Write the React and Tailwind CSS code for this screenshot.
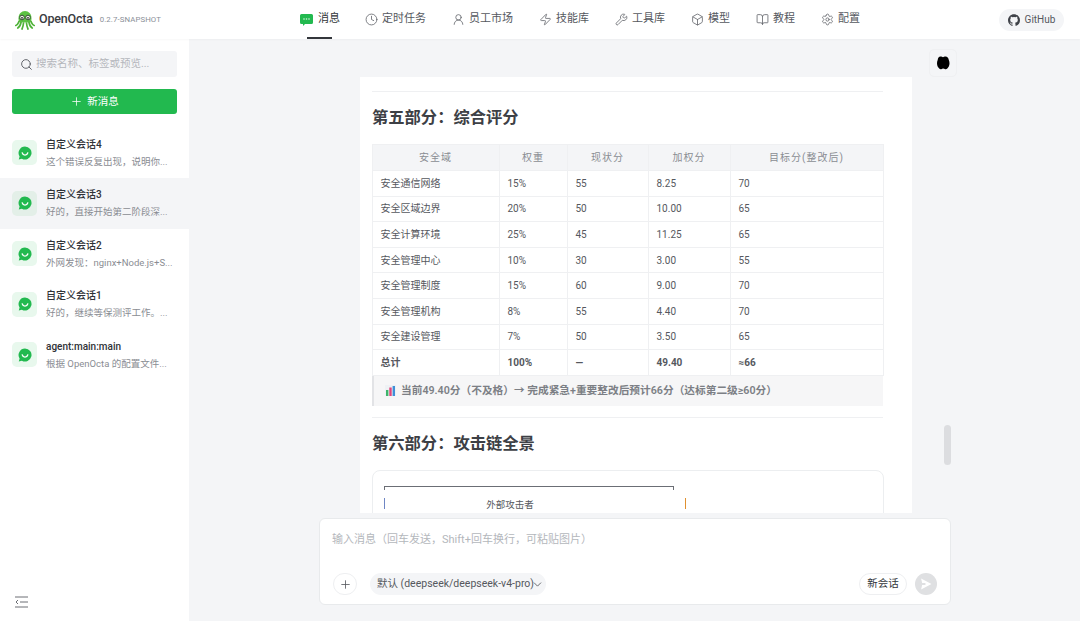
import { Clock, UserRound, Zap, Wrench, Box, BookOpen, Settings, Search, Plus, ChevronDown } from "lucide-react";

const font = "font-['Roboto','Noto_Sans_CJK_SC',sans-serif]";

const Logo = () => (
  <svg width="20" height="20" viewBox="0 0 20 20">
    <path d="M3.500 8.500C3.500 3.800 6.400 1 10 1s6.500 2.800 6.500 7.500c0 2-.6 3.200-1.500 4l-10 0c-.9-.8-1.500-2-1.500-4z" fill="#5cc243" />
    <path d="M4 11.500C3 13.500 2.500 15 .8 15.500M6 12.500C5.500 15 4.500 17 2.800 18M8.500 13c-.2 2.500-.5 4-1.500 6M11.500 13c.2 2.500.5 4 1.500 6M14 12.500c.5 2.500 1.500 4.500 3.200 5.500M16 11.500c1 2 1.500 3.500 3.200 4" stroke="#4fb238" strokeWidth="1.700" fill="none" strokeLinecap="round" />
    <circle cx="7" cy="7.500" r="2.300" fill="#eef7ea" stroke="#2b3a2b" strokeWidth=".9" />
    <circle cx="13" cy="7.500" r="2.300" fill="#eef7ea" stroke="#2b3a2b" strokeWidth=".9" />
    <circle cx="7" cy="7.800" r=".9" fill="#222" />
    <circle cx="13" cy="7.800" r=".9" fill="#222" />
  </svg>
);

const MsgIcon = () => (
  <svg width="13" height="12" viewBox="0 0 13 12">
    <path d="M1.500 0h10A1.500 1.500 0 0 1 13 1.500v7A1.500 1.500 0 0 1 11.500 10H5L3 12v-2H1.500A1.500 1.500 0 0 1 0 8.500v-7A1.500 1.500 0 0 1 1.500 0z" fill="#22b94f" />
    <circle cx="4" cy="5" r=".8" fill="#d6f5df" />
    <circle cx="6.500" cy="5" r=".8" fill="#d6f5df" />
    <circle cx="9" cy="5" r=".8" fill="#d6f5df" />
  </svg>
);

const GithubIcon = () => (
  <svg width="12" height="12" viewBox="0 0 24 24" fill="#3f4248">
    <path d="M12 .5C5.400.5 0 5.900 0 12.500c0 5.300 3.400 9.800 8.200 11.400.6.100.8-.3.800-.6v-2.200c-3.300.7-4-1.600-4-1.600-.5-1.400-1.300-1.800-1.300-1.800-1.100-.7.100-.7.100-.7 1.200.1 1.800 1.200 1.800 1.200 1.100 1.800 2.800 1.300 3.500 1 .1-.8.400-1.300.8-1.600-2.700-.3-5.500-1.300-5.500-5.900 0-1.300.5-2.400 1.200-3.200-.1-.3-.5-1.500.1-3.200 0 0 1-.3 3.300 1.200a11.500 11.500 0 0 1 6 0c2.300-1.500 3.300-1.200 3.300-1.200.7 1.700.2 2.900.1 3.200.8.800 1.200 1.900 1.200 3.200 0 4.600-2.800 5.600-5.500 5.900.4.400.8 1.100.8 2.200v3.300c0 .3.200.7.800.6A12 12 0 0 0 24 12.500C24 5.900 18.600.5 12 .5z" />
  </svg>
);

const ChatIcon = () => (
  <svg width="14" height="14" viewBox="0 0 14 14">
    <path d="M7 .5a6.500 6.500 0 1 1-3.100 12.200L.8 13.500l.8-3A6.500 6.500 0 0 1 7 .5z" fill="#22b94f" />
    <path d="M4.200 6.800c.5 1.700 1.500 2.400 2.800 2.400s2.300-.7 2.800-2.400" stroke="#fff" strokeWidth="1.300" fill="none" strokeLinecap="round" />
  </svg>
);

const BrainBlob = () => (
  <svg width="14" height="14" viewBox="0 0 14 14" fill="#000">
    <path d="M4.500.5c1 0 2 .3 2.500.8.500-.5 1.500-.8 2.500-.8 1.800 0 3 1.500 3.300 3.500.4.800.7 2 .7 3.200 0 2.300-.8 4-2 5-.8.900-2.500 1.500-3.300.6L7 12.400l-.7.400c-.8.900-2.500.3-3.300-.6-1.200-1-2-2.700-2-5 0-1.200.3-2.400.7-3.200C2 2 2.700.5 4.500.5z" />
  </svg>
);

const ChartIcon = () => (
  <svg width="11" height="11" viewBox="0 0 11 11" className="shrink-0">
    <rect width="11" height="11" fill="#eef1f4" />
    <rect x="1" y="5" width="2.400" height="6" fill="#3fb56b" />
    <rect x="4.300" y="2.500" width="2.400" height="8.500" fill="#e0457b" />
    <rect x="7.600" y="1" width="2.400" height="10" fill="#3f8fd8" />
  </svg>
);

const navItems = [
  { label: "定时任务", Icon: Clock },
  { label: "员工市场", Icon: UserRound },
  { label: "技能库", Icon: Zap },
  { label: "工具库", Icon: Wrench },
  { label: "模型", Icon: Box },
  { label: "教程", Icon: BookOpen },
  { label: "配置", Icon: Settings },
];

const sessions = [
  { title: "自定义会话4", sub: "这个错误反复出现，说明你..." },
  { title: "自定义会话3", sub: "好的，直接开始第二阶段深...", active: true },
  { title: "自定义会话2", sub: "外网发现：nginx+Node.js+S..." },
  { title: "自定义会话1", sub: "好的，继续等保测评工作。..." },
  { title: "agent:main:main", sub: "根据 OpenOcta 的配置文件..." },
];

const rows = [
  ["安全通信网络", "15%", "55", "8.25", "70"],
  ["安全区域边界", "20%", "50", "10.00", "65"],
  ["安全计算环境", "25%", "45", "11.25", "65"],
  ["安全管理中心", "10%", "30", "3.00", "55"],
  ["安全管理制度", "15%", "60", "9.00", "70"],
  ["安全管理机构", "8%", "55", "4.40", "70"],
  ["安全建设管理", "7%", "50", "3.50", "65"],
];

const Header = () => (
  <header className="h-[39px] shrink-0 bg-white flex items-center relative shadow-[0_1px_2px_rgba(0,0,0,0.03)]">
    <div className="w-[300px] shrink-0 flex items-center pl-[15px]">
      <Logo />
      <span className="ml-[4px] text-[12.500px] font-medium text-[#3a3c41] tracking-[-0.2px]">OpenOcta</span>
      <span className="ml-[7px] text-[7.800px] text-[#8a8f98] tracking-[0.1px]">0.2.7-SNAPSHOT</span>
    </div>
    <nav className="flex items-center h-full">
      <div className="relative h-full flex items-center gap-[5px] pr-[13px] text-[11px] text-[#33363b]">
        <MsgIcon />
        <span>消息</span>
        <div className="absolute bottom-0 left-[7px] w-[25px] h-[2px] bg-[#33363b]" />
      </div>
      {navItems.map(({ label, Icon }) => (
        <div key={label} className="flex items-center gap-[4px] pl-[12px] pr-[14px] text-[11px] text-[#55585e]">
          <Icon size={13} strokeWidth={1.5} className="text-[#62656b] -mt-[1px]" />
          <span>{label}</span>
        </div>
      ))}
    </nav>
    <div className="ml-auto mr-[16px] h-[22px] w-[65px] rounded-full bg-[#f4f5f7] flex items-center justify-center gap-[5px] text-[10px] text-[#55585e]">
      <GithubIcon />
      <span>GitHub</span>
    </div>
  </header>
);

const Sidebar = () => (
  <aside className="w-[189px] shrink-0 bg-white flex flex-col px-0 pt-[12px]">
    <div className="mx-[12px] h-[26px] rounded-[3px] bg-[#f4f5f7] flex items-center pl-[8px] gap-[3px] text-[10.500px] text-[#b4b7bc]">
      <Search size={13} strokeWidth={1.8} className="text-[#5f6268]" />
      <span>搜索名称、标签或预览...</span>
    </div>
    <div className="mx-[12px] mt-[12px] h-[25px] rounded-[3px] bg-[#22b94f] flex items-center justify-center gap-[4px] text-[10.500px] text-white">
      <Plus size={13} strokeWidth={1.4} />
      <span className="pt-px">新消息</span>
    </div>
    <div className="mt-[13.500px] flex flex-col">
      {sessions.map((s) => (
        <div key={s.title} className={`h-[50.500px] pl-[12px] flex items-center gap-[9px] ${s.active ? "bg-[#f4f5f7]" : ""}`}>
          <div className={`w-[25px] h-[25px] rounded-[5px] flex items-center justify-center ${s.active ? "bg-[#e3efe8]" : "bg-[#e8f8ed]"}`}>
            <ChatIcon />
          </div>
          <div className="flex flex-col gap-[3px] pt-[1px]">
            <div className="text-[10px] leading-[14px] font-medium text-[#2f3237]">{s.title}</div>
            <div className="text-[9.500px] leading-[14px] text-[#8a8d93] whitespace-nowrap">{s.sub}</div>
          </div>
        </div>
      ))}
    </div>
    <div className="mt-auto pl-[15px] pb-[13px] text-[#6c6f75]">
      <svg width="13" height="12" viewBox="0 0 13 12" fill="none" stroke="currentColor" strokeWidth="1">
        <path d="M0 1h13M5 6h8M0 11h13M3 4L1 6l2 2" />
      </svg>
    </div>
  </aside>
);

const Report = () => (
  <div className="w-[552px] h-[436px] mt-[38px] ml-[171px] bg-white pl-[12px] pr-[29px] overflow-hidden shrink-0">
    <div className="mt-[14px] border-t border-[#eff0f2]" />
    <h2 className="mt-[14px] text-[16.300px] leading-[24px] font-bold text-[#3d4045]">第五部分：综合评分</h2>
    <table className="mt-[14px] -ml-[0.500px] w-[511px] table-fixed border-collapse text-[10px] text-[#55585e]">
      <colgroup>
        <col className="w-[127px]" />
        <col className="w-[68px]" />
        <col className="w-[81px]" />
        <col className="w-[82px]" />
        <col className="w-[153px]" />
      </colgroup>
      <thead>
        <tr className="h-[26px] bg-[#f4f5f7] text-[#8a8d93]">
          {["安全域", "权重", "现状分", "加权分", "目标分(整改后)"].map((h) => (
            <th key={h} className="border border-[#eff0f2] font-normal tracking-[1px] text-center">{h}</th>
          ))}
        </tr>
      </thead>
      <tbody>
        {rows.map((r) => (
          <tr key={r[0]} className="h-[25.600px]">
            {r.map((c, i) => (
              <td key={i} className="border border-[#eff0f2] pl-[8px]">{c}</td>
            ))}
          </tr>
        ))}
        <tr className="h-[25.600px] font-bold">
          {["总计", "100%", "—", "49.40", "≈66"].map((c) => (
            <td key={c} className="border border-[#eff0f2] pl-[8px]">{c}</td>
          ))}
        </tr>
      </tbody>
    </table>
    <div className="h-[30px] w-[511px] bg-[#f6f6f7] border-l-[2px] border-[#e2e3e6] pl-[11px] flex items-center gap-[5px] text-[10.700px] font-semibold text-[#7c7f85] whitespace-nowrap">
      <ChartIcon />
      <span>当前49.40分（不及格）→ 完成紧急+重要整改后预计66分（达标第二级≥60分）</span>
    </div>
    <div className="mt-[11px] border-t border-[#eff0f2]" />
    <h2 className="mt-[14px] text-[16.300px] leading-[24px] font-bold text-[#3d4045]">第六部分：攻击链全景</h2>
    <div className="mt-[14px] w-[512px] h-[80px] rounded-t-[8px] border border-[#eceef0] pt-[15px] pl-[11px]">
      <div className="w-[290px] h-[4px] border-t border-x border-[#6b6e75]" />
      <div className="flex w-[302px] h-[12px] mt-[8px] justify-between">
        <div className="w-px h-[11px] bg-[#6f86c4]" />
        <div className="w-px h-[11px] bg-[#e0902f]" />
      </div>
      <div className="w-[252px] -mt-[12px] text-center text-[9.500px] leading-[14px] text-[#55585e]">外部攻击者</div>
    </div>
  </div>
);

const Composer = () => (
  <div className="mt-[5px] ml-[130px] w-[632px] h-[87px] shrink-0 rounded-[6px] bg-white border border-[#e8eaec] flex flex-col px-[13px] pt-[13px] pb-[9px]">
    <div className="-ml-[1px] text-[11px] leading-[15px] text-[#b4b7bc]">输入消息（回车发送，Shift+回车换行，可粘贴图片）</div>
    <div className="mt-auto flex items-center">
      <div className="w-[24px] h-[22px] rounded-full border border-[#eeeff1] flex items-center justify-center text-[#55585e]">
        <Plus size={13} strokeWidth={1.5} />
      </div>
      <div className="ml-[13px] h-[22px] w-[176px] rounded-full bg-[#f4f5f7] flex items-center pl-[7px] text-[10.500px] text-[#55585e] whitespace-nowrap">
        <span>默认 (deepseek/deepseek-v4-pro)</span>
        <ChevronDown size={13} strokeWidth={1.6} className="shrink-0 -ml-[3px]" />
      </div>
      <div className="ml-auto h-[22px] w-[48px] rounded-full border border-[#eeeff1] flex items-center justify-center text-[10.500px] text-[#33363b]">新会话</div>
      <div className="ml-[8px] w-[22px] h-[22px] rounded-full bg-[#dfe0e2] flex items-center justify-center">
        <svg width="12" height="12" viewBox="0 0 11 11"><path d="M1 .5l9.500 5-9.500 5 1-4h3v-2H2z" fill="#fff" /></svg>
      </div>
    </div>
  </div>
);

const App = () => (
  <div className={`w-[1080px] h-[621px] flex flex-col overflow-hidden bg-[#f4f5f7] ${font}`}>
    <Header />
    <div className="flex flex-1 min-h-0">
      <Sidebar />
      <main className="relative flex-1 flex flex-col">
        <Report />
        <Composer />
        <div className="absolute left-[740px] top-[10px] w-[28px] h-[28px] rounded-[5px] border border-[#eff0f2] flex items-center justify-center">
          <BrainBlob />
        </div>
        <div className="absolute left-[755px] top-[386px] w-[7px] h-[40px] rounded-full bg-[#dcdde0]" />
      </main>
    </div>
  </div>
);

export default App;
